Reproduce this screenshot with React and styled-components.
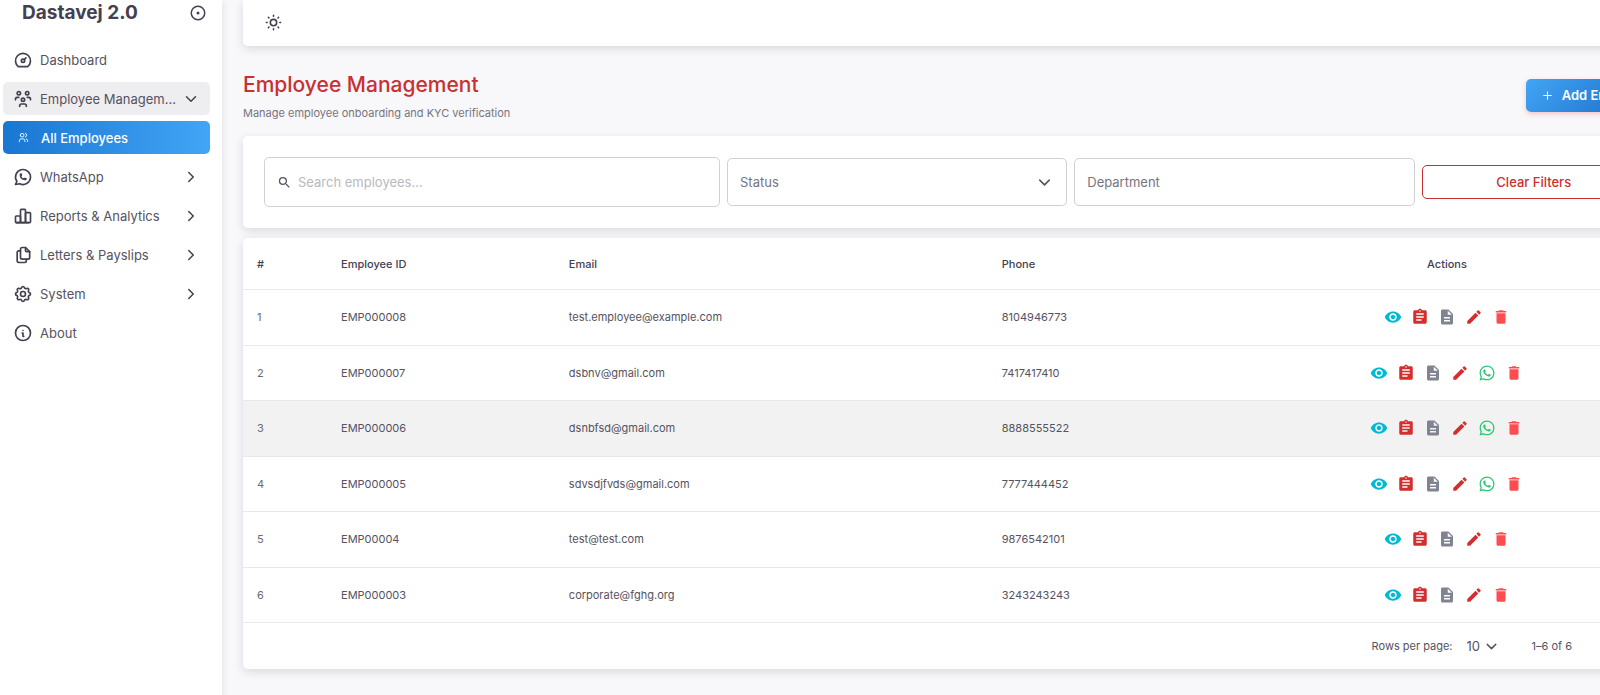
import React from "react";
import styled, { createGlobalStyle, css } from "styled-components";
import {
  TbDashboard, TbUsersGroup, TbUsers, TbBrandWhatsapp, TbChartBar, TbFiles,
  TbSettings, TbInfoCircle, TbChevronRight, TbChevronDown, TbCircleDot, TbSun, TbPlus,
} from "react-icons/tb";
import {
  MdVisibility, MdAssignment, MdDescription, MdEdit, MdDelete, MdSearch, MdWhatsapp,
} from "react-icons/md";

const color = {
  page: "#f8f7fa",
  ink: "#555261",
  inkStrong: "#444050",
  muted: "#77747f",
  faint: "#bab8c0",
  line: "#e8e7ea",
  border: "#d1d0d4",
  red: "#c9302f",
  white: "#ffffff",
};

const GlobalStyle = createGlobalStyle`
  *, *::before, *::after { box-sizing: border-box; }
  body {
    margin: 0;
    background: ${color.page};
    color: ${color.ink};
    font-family: Inter, "Liberation Sans", sans-serif;
    font-size: 13px;
    line-height: 20px;
  }
  button, input, select { font: inherit; color: inherit; margin: 0; }
  svg { display: block; flex: none; }
`;

/* The content runs past the right edge of the window. */
const Shell = styled.div`
  display: flex;
  min-height: 100vh;
  overflow: hidden;
`;

const Sidebar = styled.aside`
  flex: 0 0 222px;
  min-width: 0;
  background: ${color.white};
  box-shadow: 0 2px 8px rgba(47, 43, 61, 0.12);
`;

const Brand = styled.div`
  display: flex;
  align-items: center;
  justify-content: space-between;
  height: 26px;
  padding: 0 15px 0 22px;
`;

const BrandName = styled.span`
  font-size: 19px;
  font-weight: 700;
  line-height: 26px;
  color: ${color.inkStrong};
`;

const IconButton = styled.button`
  display: grid;
  place-items: center;
  padding: 0;
  border: 0;
  background: none;
  color: ${(p) => p.$tone || color.inkStrong};
  cursor: pointer;
`;

const Menu = styled.nav`
  display: flex;
  flex-direction: column;
  gap: 6px;
  padding: 17px 12px 0 3px;
`;

const MenuItem = styled.a`
  display: flex;
  align-items: center;
  height: 33px;
  padding: 0 10px;
  border-radius: 5px;
  color: ${color.inkStrong};
  text-decoration: none;
  ${(p) => p.$open && css`background: #eeedf0;`}
  ${(p) => p.$active && css`
    padding-left: 15px;
    background: linear-gradient(90deg, #1976d2, #42a5f5);
    color: ${color.white};
    font-weight: 500;
  `}
`;

const MenuLabel = styled.span`
  flex: 1;
  min-width: 0;
  margin-left: ${(p) => (p.$active ? 12 : 7)}px;
  overflow: hidden;
  white-space: nowrap;
  text-overflow: ellipsis;
  color: ${(p) => (p.$active ? color.white : color.ink)};
`;

const Main = styled.main`
  flex: 0 0 auto;
  width: calc(100% - 222px + 67px);
  padding: 0 0 26px 21px;
  margin-right: -67px;
`;

const Card = styled.section`
  background: ${color.white};
  border-radius: 5px;
  box-shadow: 0 3px 10px rgba(47, 43, 61, 0.14);
`;

const TopBar = styled(Card)`
  display: flex;
  align-items: center;
  height: 46px;
  padding: 0 21px 2px;
  border-radius: 0 0 5px 5px;
`;

const PageHead = styled.header`
  display: flex;
  align-items: center;
  justify-content: space-between;
  padding: 23px 0 13px;
`;

const Title = styled.h1`
  margin: 0;
  font-size: 21px;
  font-weight: 500;
  line-height: 32px;
  color: ${color.red};
`;

const Subtitle = styled.p`
  margin: 2px 0 0;
  font-size: 11px;
  line-height: 20px;
  color: ${color.muted};
`;

const AddButton = styled.button`
  display: flex;
  align-items: center;
  gap: 8px;
  height: 33px;
  margin-bottom: 2px;
  padding: 0 15px;
  border: 0;
  border-radius: 5px;
  background: linear-gradient(135deg, #42a5f5, #1565c0);
  box-shadow: 0 2px 5px rgba(234, 84, 85, 0.3);
  color: ${color.white};
  font-weight: 600;
  white-space: nowrap;
`;

const Filters = styled(Card)`
  display: grid;
  grid-template-columns: repeat(12, minmax(0, 1fr));
  align-items: center;
  column-gap: 7px;
  margin-bottom: 10px;
  padding: 21px;
`;

const Field = styled.label`
  display: flex;
  align-items: center;
  gap: 6px;
  grid-column: span ${(p) => p.$span};
  height: ${(p) => p.$height || 48}px;
  padding: 0 12px;
  border: 1px solid ${color.border};
  border-radius: 5px;
`;

const TextInput = styled.input`
  flex: 1;
  min-width: 0;
  padding: 0;
  border: 0;
  outline: 0;
  background: none;
  &::placeholder { color: ${(p) => p.$hint}; opacity: 1; }
`;

const PlainSelect = styled.select`
  flex: ${(p) => (p.$grow ? 1 : "none")};
  padding: 0;
  border: 0;
  outline: 0;
  background: none;
  appearance: none;
  color: ${(p) => p.$tone || color.ink};
`;

const ClearButton = styled.button`
  grid-column: span 2;
  height: 34px;
  border: 1px solid ${color.red};
  border-radius: 5px;
  background: none;
  color: ${color.red};
  font-weight: 500;
`;

const Table = styled.table`
  width: 100%;
  height: 385px;
  table-layout: fixed;
  border-collapse: separate;
  border-spacing: 0;
  font-size: 11px;
  line-height: 18px;
`;

const Th = styled.th`
  width: ${(p) => p.$width};
  height: 52px;
  padding: 0 14px;
  border-bottom: 1px solid ${color.line};
  font-weight: 500;
  text-align: ${(p) => p.$align || "left"};
  color: ${color.inkStrong};
`;

const Row = styled.tr`
  background: ${(p) => (p.$hovered ? "#f2f2f3" : "transparent")};
`;

const Td = styled.td`
  padding: 0 14px;
  border-bottom: 1px solid ${color.line};
  color: ${(p) => (p.$soft ? "#6c6976" : color.ink)};
`;

const Actions = styled.div`
  display: flex;
  justify-content: center;
  gap: 9px;
`;

const Pager = styled.footer`
  display: flex;
  align-items: center;
  justify-content: flex-end;
  height: 46px;
  padding-right: 95px;
  font-size: 11px;
`;

const PageSize = styled.span`
  display: flex;
  align-items: center;
  gap: 2px;
  margin: 0 32px 0 14px;
  font-size: 13px;
`;

const menu = [
  { label: "Dashboard", icon: TbDashboard },
  { label: "Employee Management", icon: TbUsersGroup, arrow: TbChevronDown, open: true },
  { label: "All Employees", icon: TbUsers, active: true },
  { label: "WhatsApp", icon: TbBrandWhatsapp, arrow: TbChevronRight },
  { label: "Reports & Analytics", icon: TbChartBar, arrow: TbChevronRight },
  { label: "Letters & Payslips", icon: TbFiles, arrow: TbChevronRight },
  { label: "System", icon: TbSettings, arrow: TbChevronRight },
  { label: "About", icon: TbInfoCircle },
];

const employees = [
  { id: "EMP000008", email: "test.employee@example.com", phone: "8104946773" },
  { id: "EMP000007", email: "dsbnv@gmail.com", phone: "7417417410", whatsapp: true },
  { id: "EMP000006", email: "dsnbfsd@gmail.com", phone: "8888555522", whatsapp: true, hovered: true },
  { id: "EMP000005", email: "sdvsdjfvds@gmail.com", phone: "7777444452", whatsapp: true },
  { id: "EMP00004", email: "test@test.com", phone: "9876542101" },
  { id: "EMP000003", email: "corporate@fghg.org", phone: "3243243243" },
];

const actions = [
  { name: "View", icon: MdVisibility, tone: "#00bad1" },
  { name: "Assignments", icon: MdAssignment, tone: "#d32f2f" },
  { name: "Documents", icon: MdDescription, tone: "#808390" },
  { name: "Edit", icon: MdEdit, tone: "#d32f2f" },
  { name: "WhatsApp", icon: MdWhatsapp, tone: "#28c76f", optional: true },
  { name: "Delete", icon: MdDelete, tone: "#ff4c51" },
];

export default function App() {
  return (
    <>
      <GlobalStyle />
      <Shell>
        <Sidebar>
          <Brand>
            <BrandName>Dastavej 2.0</BrandName>
            <IconButton type="button" aria-label="Pin menu"><TbCircleDot size={18} /></IconButton>
          </Brand>
          <Menu>
            {menu.map(({ label, icon: Icon, arrow: Arrow, open, active }) => (
              <MenuItem key={label} href="#" $open={open} $active={active}>
                <Icon size={active ? 11 : 20} />
                <MenuLabel $active={active}>{label}</MenuLabel>
                {Arrow && <Arrow size={18} />}
              </MenuItem>
            ))}
          </Menu>
        </Sidebar>
        <Main>
          <TopBar as="div">
            <IconButton type="button" aria-label="Light mode"><TbSun size={19} /></IconButton>
          </TopBar>
          <PageHead>
            <div>
              <Title>Employee Management</Title>
              <Subtitle>Manage employee onboarding and KYC verification</Subtitle>
            </div>
            <AddButton type="button"><TbPlus size={13} />Add Employee</AddButton>
          </PageHead>
          <Filters>
            <Field $span={4} $height={50}>
              <MdSearch size={15} />
              <TextInput aria-label="Search employees" placeholder="Search employees..." $hint={color.faint} />
            </Field>
            <Field $span={3}>
              <PlainSelect aria-label="Status" $grow $tone={color.muted}><option>Status</option></PlainSelect>
              <TbChevronDown size={19} />
            </Field>
            <Field $span={3}>
              <TextInput aria-label="Department" placeholder="Department" $hint={color.muted} />
            </Field>
            <ClearButton type="button">Clear Filters</ClearButton>
          </Filters>
          <Card>
            <Table>
              <thead>
                <tr>
                  <Th $width="5.9%">#</Th>
                  <Th $width="16%">Employee ID</Th>
                  <Th $width="30.4%">Email</Th>
                  <Th $width="16.8%">Phone</Th>
                  <Th $width="30.9%" $align="center">Actions</Th>
                </tr>
              </thead>
              <tbody>
                {employees.map((e, i) => (
                  <Row key={e.id} $hovered={e.hovered}>
                    <Td $soft>{i + 1}</Td>
                    <Td>{e.id}</Td>
                    <Td>{e.email}</Td>
                    <Td>{e.phone}</Td>
                    <Td>
                      <Actions>
                        {actions.filter((a) => !a.optional || e.whatsapp).map(({ name, icon: Icon, tone }) => (
                          <IconButton key={name} type="button" aria-label={name} $tone={tone}><Icon size={18} /></IconButton>
                        ))}
                      </Actions>
                    </Td>
                  </Row>
                ))}
              </tbody>
            </Table>
            <Pager>
              <label htmlFor="page-size">Rows per page:</label>
              <PageSize>
                <PlainSelect id="page-size"><option>10</option></PlainSelect>
                <TbChevronDown size={17} />
              </PageSize>
              <span>1–6 of 6</span>
            </Pager>
          </Card>
        </Main>
      </Shell>
    </>
  );
}
